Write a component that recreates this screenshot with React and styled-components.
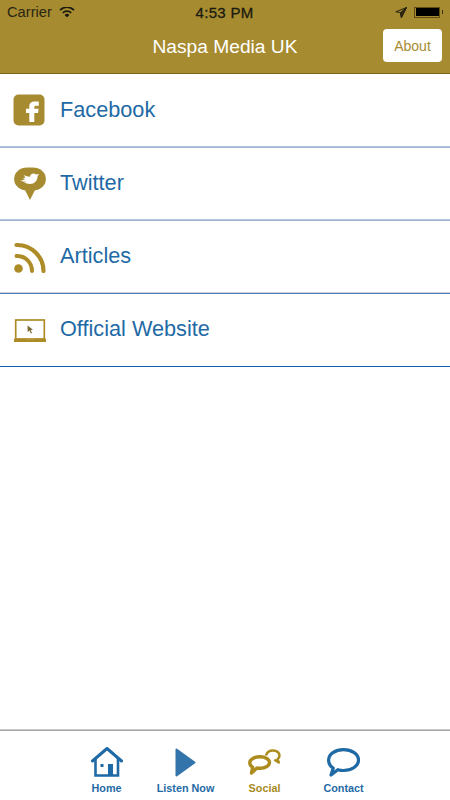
import React from "react";
import styled, { createGlobalStyle } from "styled-components";

const GOLD = "#a68b30";
const BLUE = "#1f6aa5";

const GlobalStyle = createGlobalStyle`
  html, body {
    margin: 0;
    padding: 0;
    background: #fff;
    font-family: "Liberation Sans", Arial, sans-serif;
  }
`;

const Page = styled.div`
  width: 450px;
  height: 800px;
  display: flex;
  flex-direction: column;
  overflow: hidden;
  background: #fff;
`;

const Header = styled.header`
  height: 74px;
  flex: none;
  box-sizing: border-box;
  background: ${GOLD};
  border-bottom: 1px solid #7b6518;
  display: flex;
  flex-direction: column;
`;

const StatusBar = styled.div`
  height: 24px;
  flex: none;
  display: grid;
  grid-template-columns: 1fr auto 1fr;
  align-items: center;
  padding: 0 8px 0 7px;
  color: #2a2614;
  font-size: 14.7px;
`;

const StatusLeft = styled.div`
  display: flex;
  align-items: center;
  gap: 7px;
`;

const StatusTime = styled.div`
  font-size: 15px;
  letter-spacing: 0.3px;
  color: #1a1a10;
  -webkit-text-stroke: 0.3px #1a1a10;
`;

const StatusRight = styled.div`
  display: flex;
  align-items: center;
  justify-content: flex-end;
  gap: 7px;
`;

const Battery = styled.div`
  position: relative;
  width: 26px;
  height: 11px;
  box-sizing: border-box;
  border: 1.5px solid #5f4e14;
  padding: 0.5px;
  margin-right: 2px;

  &::before {
    content: "";
    display: block;
    height: 100%;
    background: #000;
  }

  &::after {
    content: "";
    position: absolute;
    right: -3.5px;
    top: 2px;
    width: 1px;
    height: 4px;
    background: #3a3010;
  }
`;

const NavBar = styled.div`
  flex: 1;
  display: flex;
  align-items: center;
  justify-content: center;
  position: relative;
  padding-bottom: 4px;
`;

const Title = styled.div`
  color: #fff;
  font-size: 19.2px;
`;

const AboutButton = styled.button`
  position: absolute;
  right: 8px;
  top: 5px;
  width: 59px;
  height: 33px;
  border: none;
  border-radius: 4px;
  background: #fff;
  color: ${GOLD};
  font-family: inherit;
  font-size: 14px;
  padding: 0;
`;

const List = styled.ul`
  list-style: none;
  margin: 0;
  padding: 1px 0 0;
  flex: 1;
`;

const Row = styled.li`
  height: 73px;
  box-sizing: border-box;
  padding-bottom: 2px;
  border-bottom: 1px solid ${(p) => p.$line};
  box-shadow: inset 0 -1px 0 ${(p) => p.$soft};
  display: flex;
  align-items: center;
`;

const RowIcon = styled.div`
  width: 60px;
  flex: none;
  display: flex;
  justify-content: flex-start;
  padding-left: 13px;
  box-sizing: border-box;
`;

const RowLabel = styled.span`
  color: ${BLUE};
  font-size: 21.7px;
`;

const TabBar = styled.nav`
  height: 70px;
  flex: none;
  box-sizing: border-box;
  border-top: 1px solid #a8a8a8;
  box-shadow: 0 -1px 0 #c8c8c8;
  background: #fff;
  display: flex;
  justify-content: center;
`;

const Tab = styled.div`
  width: 79px;
  display: flex;
  flex-direction: column;
  align-items: center;
  padding-top: 14px;
  color: ${(p) => (p.$active ? "#a68b1e" : BLUE)};
`;

const TabIconBox = styled.div`
  height: 34px;
  display: flex;
  align-items: center;
  justify-content: center;
`;

const TabLabel = styled.span`
  font-size: 10.8px;
  font-weight: 700;
  line-height: 13px;
  margin-top: 3px;
`;

const Wifi = () => (
  <svg width="16" height="10.5" viewBox="0 1.5 16 10.5" fill="none" stroke="#1a1a10" strokeWidth="1.7">
    <path d="M1 4.6a10 10 0 0 1 14 0" />
    <path d="M3.800 7.300a6 6 0 0 1 8.400 0" />
    <path d="M8 12 5.600 9.400a3.600 3.600 0 0 1 4.800 0z" fill="#1a1a10" stroke="none" />
  </svg>
);

const LocationArrow = () => (
  <svg width="12" height="11" viewBox="0 0 12 11" fill="none" stroke="#1a1a10" strokeWidth="0.9">
    <path d="M11.500 .5 .8 4.800l4.700.8.900 4.900z" />
    <path d="M11.500 .5 5.500 5.600l.9 4.900z" fill="#3a3010" />
  </svg>
);

const FacebookIcon = () => (
  <svg width="32" height="32" viewBox="0 0 32 32">
    <rect x="0.5" y="0.5" width="31" height="31" rx="5" fill={GOLD} />
    <path
      d="M16.300 28v-9H13v-4.300h3.300V12c0-3 2-4.600 5-4.600h4.500v4.300H23c-1.200 0-1.700.5-1.700 1.600v1.400h4.300l-.5 4.300h-3.800v9z"
      fill="#fff"
    />
  </svg>
);

const TwitterIcon = () => (
  <svg width="33" height="33" viewBox="0 0 33 33">
    <rect x="1.200" y="0.5" width="31.600" height="23" rx="13" ry="11" fill={GOLD} />
    <path d="M11 21h12l-6 12z" fill={GOLD} />
    <path
      d="M7 13.500C9 13.800 11 13 12 12L9.500 11.200 12.500 10.500 10.500 8C13 9.200 15 9.700 17 9.700 17.300 7 21 5.500 23 7.500L26 7 24.500 9.500C24.500 13.500 21.500 17 17 17 14.500 17 12.500 16 11 15 12 15 13 14.800 13.500 14.300 11 15 9 14.500 7 13.500z"
      fill="#fff"
    />
  </svg>
);

const RssIcon = () => (
  <svg width="33" height="33" viewBox="0 -1 33 33" fill="none" stroke="#ad8c28" strokeLinecap="round">
    <circle cx="5.500" cy="27.500" r="4.300" fill="#ad8c28" stroke="none" />
    <path d="M3.500 15c8.500-.5 15.500 6.500 15.500 15" strokeWidth="4" />
    <path d="M3.500 4c15-.5 27 12 27 26" strokeWidth="4.200" />
  </svg>
);

const LaptopIcon = () => (
  <svg width="33" height="26" viewBox="-1 -3 33 26" fill="none">
    <rect x="1.700" y="1" width="28.600" height="19" stroke="#ad8c28" strokeWidth="1.700" />
    <path d="M0 19.700h12l1 1h6l1-1h12V23H0z" fill="#ad8c28" />
    <path d="M13.500 6.500l5.500 4.300-2.300.3 1.300 3-1.200.4-1.200-2.900-1.900 1.500z" fill="#7a6a30" />
  </svg>
);

const HomeIcon = () => (
  <svg width="32" height="30" viewBox="0 0 32 30" fill="none" stroke={BLUE}>
    <path d="M1.500 14 16 1.500 30.500 14" strokeWidth="3" strokeLinecap="round" strokeLinejoin="round" />
    <path d="M4.500 11v17.500h22.500V11" strokeWidth="2.600" />
    <rect x="17" y="17" width="5" height="11.500" fill={BLUE} stroke="none" />
    <rect x="9.500" y="17" width="3" height="3" fill={BLUE} stroke="none" />
  </svg>
);

const PlayIcon = () => (
  <svg width="21" height="29" viewBox="0 0 21 29">
    <path d="M1.500 1.500 19.500 14.500 1.500 27.500z" fill="#3374ab" stroke="#3374ab" strokeWidth="2" strokeLinejoin="round" />
  </svg>
);

const SocialIcon = () => (
  <svg width="33" height="26" viewBox="0 0 33 26" fill="none" stroke="#ad8c1e">
    <path
      d="M12 7.800c5.500 0 9.500 2.500 9.500 5.600s-4 5.900-9.500 5.900c-1 0-2-.1-3-.3L3.500 24l1.200-5.800C2.500 17 1.800 15 1.800 13.400c0-3.100 4.700-5.600 10.200-5.600z"
      strokeWidth="3.400"
      strokeLinejoin="round"
    />
    <path
      d="M18 6.500C19 3 22 1.500 25 1.500c4 0 6.500 2.500 6.500 5 0 2-1 3-2 3.700l1.300 3.300-4.500-2.700"
      strokeWidth="2.500"
      strokeLinejoin="round"
    />
  </svg>
);

const ContactIcon = () => (
  <svg width="33" height="29" viewBox="0 0 33 29" fill="none" stroke={BLUE}>
    <path
      d="M16.500 1.600c8.300 0 15 4.500 15 10.400s-6.700 10.500-15 10.500c-2 0-4-.3-5.700-.8L4 27l2.200-6.800C3.300 18.300 1.600 15.500 1.600 12 1.600 6.100 8.200 1.600 16.500 1.600z"
      strokeWidth="3.200"
      strokeLinejoin="round"
    />
  </svg>
);

const rows = [
  { label: "Facebook", icon: <FacebookIcon />, line: "#a0b5d3", soft: "#b5c7e0" },
  { label: "Twitter", icon: <TwitterIcon />, line: "#a0b5d3", soft: "#b5c4dc" },
  { label: "Articles", icon: <RssIcon />, line: "#4d7fb5", soft: "#c8d2e2" },
  { label: "Official Website", icon: <LaptopIcon />, line: "#0f5ca8", soft: "#fff" },
];

const tabs = [
  { label: "Home", icon: <HomeIcon /> },
  { label: "Listen Now", icon: <PlayIcon /> },
  { label: "Social", icon: <SocialIcon />, active: true },
  { label: "Contact", icon: <ContactIcon /> },
];

export default function App() {
  return (
    <Page>
      <GlobalStyle />
      <Header>
        <StatusBar>
          <StatusLeft>
            Carrier
            <Wifi />
          </StatusLeft>
          <StatusTime>4:53 PM</StatusTime>
          <StatusRight>
            <LocationArrow />
            <Battery />
          </StatusRight>
        </StatusBar>
        <NavBar>
          <Title>Naspa Media UK</Title>
          <AboutButton>About</AboutButton>
        </NavBar>
      </Header>
      <List>
        {rows.map((row) => (
          <Row key={row.label} $line={row.line} $soft={row.soft}>
            <RowIcon>{row.icon}</RowIcon>
            <RowLabel>{row.label}</RowLabel>
          </Row>
        ))}
      </List>
      <TabBar>
        {tabs.map((tab) => (
          <Tab key={tab.label} $active={tab.active}>
            <TabIconBox>{tab.icon}</TabIconBox>
            <TabLabel>{tab.label}</TabLabel>
          </Tab>
        ))}
      </TabBar>
    </Page>
  );
}
